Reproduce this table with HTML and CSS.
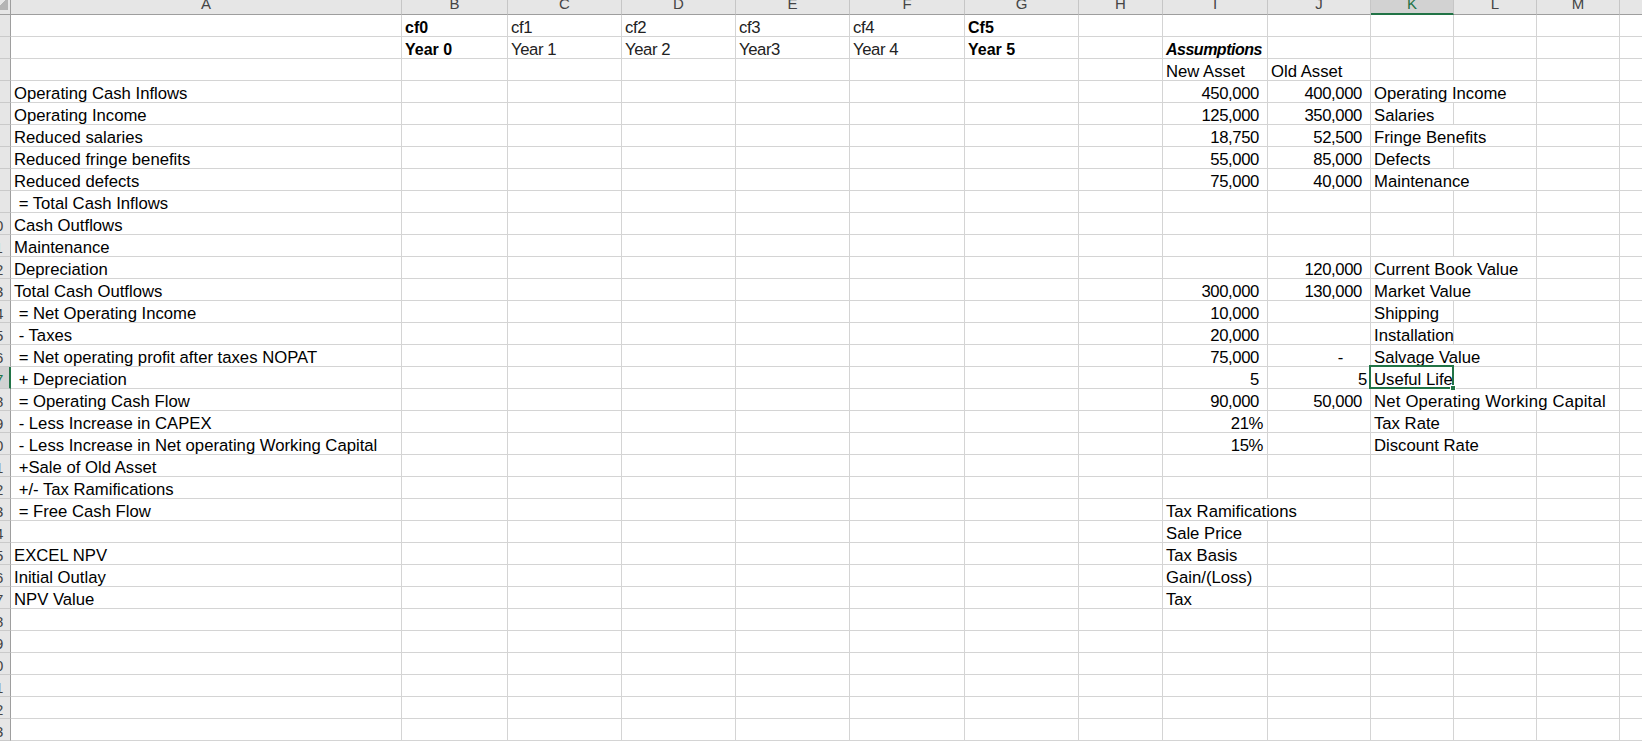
FILE: index.html
```html
<!DOCTYPE html>
<html lang="en">
<head>
    <meta charset="UTF-8">
    <meta name="viewport" content="width=device-width, initial-scale=1.0">
    <title>Capital Budgeting</title>
    <link rel="stylesheet" href="styles.css">
</head>
<body>
<div class="sheet">
    <div class="hdr">
        <div class="ch corner"></div>
        <div class="ch">A</div><div class="ch">B</div><div class="ch">C</div><div class="ch">D</div>
        <div class="ch">E</div><div class="ch">F</div><div class="ch">G</div><div class="ch">H</div>
        <div class="ch">I</div><div class="ch">J</div><div class="ch on">K</div><div class="ch">L</div>
        <div class="ch">M</div><div class="ch">N</div>
    </div>

    <div class="row"><div class="rh"><span>1</span></div>
        <div class="c"></div><div class="c b">cf0</div><div class="c thin">cf1</div><div class="c thin">cf2</div><div class="c thin">cf3</div><div class="c thin">cf4</div><div class="c b">Cf5</div>
        <div class="c"></div><div class="c"></div><div class="c"></div><div class="c"></div><div class="c"></div><div class="c"></div><div class="c"></div>
    </div>
    <div class="row"><div class="rh"><span>2</span></div>
        <div class="c"></div><div class="c b">Year 0</div><div class="c thin">Year 1</div><div class="c thin">Year 2</div><div class="c thin">Year3</div><div class="c thin">Year 4</div><div class="c b">Year 5</div>
        <div class="c"></div><div class="c bi">Assumptions</div><div class="c"></div><div class="c"></div><div class="c"></div><div class="c"></div><div class="c"></div>
    </div>
    <div class="row"><div class="rh"><span>3</span></div>
        <div class="c"></div><div class="c"></div><div class="c"></div><div class="c"></div><div class="c"></div><div class="c"></div><div class="c"></div><div class="c"></div>
        <div class="c">New Asset</div><div class="c">Old Asset</div><div class="c"></div><div class="c"></div><div class="c"></div><div class="c"></div>
    </div>
    <div class="row"><div class="rh"><span>4</span></div>
        <div class="c">Operating Cash Inflows</div><div class="c"></div><div class="c"></div><div class="c"></div><div class="c"></div><div class="c"></div><div class="c"></div><div class="c"></div>
        <div class="c num">450,000</div><div class="c num">400,000</div><div class="c s2">Operating Income</div><div class="c"></div><div class="c"></div>
    </div>
    <div class="row"><div class="rh"><span>5</span></div>
        <div class="c">Operating Income</div><div class="c"></div><div class="c"></div><div class="c"></div><div class="c"></div><div class="c"></div><div class="c"></div><div class="c"></div>
        <div class="c num">125,000</div><div class="c num">350,000</div><div class="c">Salaries</div><div class="c"></div><div class="c"></div><div class="c"></div>
    </div>
    <div class="row"><div class="rh"><span>6</span></div>
        <div class="c">Reduced salaries</div><div class="c"></div><div class="c"></div><div class="c"></div><div class="c"></div><div class="c"></div><div class="c"></div><div class="c"></div>
        <div class="c num">18,750</div><div class="c num">52,500</div><div class="c s2">Fringe Benefits</div><div class="c"></div><div class="c"></div>
    </div>
    <div class="row"><div class="rh"><span>7</span></div>
        <div class="c">Reduced fringe benefits</div><div class="c"></div><div class="c"></div><div class="c"></div><div class="c"></div><div class="c"></div><div class="c"></div><div class="c"></div>
        <div class="c num">55,000</div><div class="c num">85,000</div><div class="c">Defects</div><div class="c"></div><div class="c"></div><div class="c"></div>
    </div>
    <div class="row"><div class="rh"><span>8</span></div>
        <div class="c">Reduced defects</div><div class="c"></div><div class="c"></div><div class="c"></div><div class="c"></div><div class="c"></div><div class="c"></div><div class="c"></div>
        <div class="c num">75,000</div><div class="c num">40,000</div><div class="c s2">Maintenance</div><div class="c"></div><div class="c"></div>
    </div>
    <div class="row"><div class="rh"><span>9</span></div>
        <div class="c"> = Total Cash Inflows</div><div class="c"></div><div class="c"></div><div class="c"></div><div class="c"></div><div class="c"></div><div class="c"></div><div class="c"></div>
        <div class="c"></div><div class="c"></div><div class="c"></div><div class="c"></div><div class="c"></div><div class="c"></div>
    </div>
    <div class="row"><div class="rh"><span>10</span></div>
        <div class="c">Cash Outflows</div><div class="c"></div><div class="c"></div><div class="c"></div><div class="c"></div><div class="c"></div><div class="c"></div><div class="c"></div>
        <div class="c"></div><div class="c"></div><div class="c"></div><div class="c"></div><div class="c"></div><div class="c"></div>
    </div>
    <div class="row"><div class="rh"><span>11</span></div>
        <div class="c">Maintenance</div><div class="c"></div><div class="c"></div><div class="c"></div><div class="c"></div><div class="c"></div><div class="c"></div><div class="c"></div>
        <div class="c"></div><div class="c"></div><div class="c"></div><div class="c"></div><div class="c"></div><div class="c"></div>
    </div>
    <div class="row"><div class="rh"><span>12</span></div>
        <div class="c">Depreciation</div><div class="c"></div><div class="c"></div><div class="c"></div><div class="c"></div><div class="c"></div><div class="c"></div><div class="c"></div>
        <div class="c"></div><div class="c num">120,000</div><div class="c s2">Current Book Value</div><div class="c"></div><div class="c"></div>
    </div>
    <div class="row"><div class="rh"><span>13</span></div>
        <div class="c">Total Cash Outflows</div><div class="c"></div><div class="c"></div><div class="c"></div><div class="c"></div><div class="c"></div><div class="c"></div><div class="c"></div>
        <div class="c num">300,000</div><div class="c num">130,000</div><div class="c s2">Market Value</div><div class="c"></div><div class="c"></div>
    </div>
    <div class="row"><div class="rh"><span>14</span></div>
        <div class="c"> = Net Operating Income</div><div class="c"></div><div class="c"></div><div class="c"></div><div class="c"></div><div class="c"></div><div class="c"></div><div class="c"></div>
        <div class="c num">10,000</div><div class="c"></div><div class="c">Shipping</div><div class="c"></div><div class="c"></div><div class="c"></div>
    </div>
    <div class="row"><div class="rh"><span>15</span></div>
        <div class="c"> - Taxes</div><div class="c"></div><div class="c"></div><div class="c"></div><div class="c"></div><div class="c"></div><div class="c"></div><div class="c"></div>
        <div class="c num">20,000</div><div class="c"></div><div class="c">Installation</div><div class="c"></div><div class="c"></div><div class="c"></div>
    </div>
    <div class="row"><div class="rh"><span>16</span></div>
        <div class="c"> = Net operating profit after taxes NOPAT</div><div class="c"></div><div class="c"></div><div class="c"></div><div class="c"></div><div class="c"></div><div class="c"></div><div class="c"></div>
        <div class="c num">75,000</div><div class="c num dash">-</div><div class="c s2">Salvage Value</div><div class="c"></div><div class="c"></div>
    </div>
    <div class="row"><div class="rh on"><span>17</span></div>
        <div class="c"> + Depreciation</div><div class="c"></div><div class="c"></div><div class="c"></div><div class="c"></div><div class="c"></div><div class="c"></div><div class="c"></div>
        <div class="c num">5</div><div class="c num gen">5</div><div class="c sel">Useful Life</div><div class="c"></div><div class="c"></div><div class="c"></div>
    </div>
    <div class="row"><div class="rh"><span>18</span></div>
        <div class="c"> = Operating Cash Flow</div><div class="c"></div><div class="c"></div><div class="c"></div><div class="c"></div><div class="c"></div><div class="c"></div><div class="c"></div>
        <div class="c num">90,000</div><div class="c num">50,000</div><div class="c s3 wide">Net Operating Working Capital</div><div class="c"></div>
    </div>
    <div class="row"><div class="rh"><span>19</span></div>
        <div class="c"> - Less Increase in CAPEX</div><div class="c"></div><div class="c"></div><div class="c"></div><div class="c"></div><div class="c"></div><div class="c"></div><div class="c"></div>
        <div class="c num pct">21%</div><div class="c"></div><div class="c">Tax Rate</div><div class="c"></div><div class="c"></div><div class="c"></div>
    </div>
    <div class="row"><div class="rh"><span>20</span></div>
        <div class="c"> - Less Increase in Net operating Working Capital</div><div class="c"></div><div class="c"></div><div class="c"></div><div class="c"></div><div class="c"></div><div class="c"></div><div class="c"></div>
        <div class="c num pct">15%</div><div class="c"></div><div class="c s2">Discount Rate</div><div class="c"></div><div class="c"></div>
    </div>
    <div class="row"><div class="rh"><span>21</span></div>
        <div class="c"> +Sale of Old Asset</div><div class="c"></div><div class="c"></div><div class="c"></div><div class="c"></div><div class="c"></div><div class="c"></div><div class="c"></div>
        <div class="c"></div><div class="c"></div><div class="c"></div><div class="c"></div><div class="c"></div><div class="c"></div>
    </div>
    <div class="row"><div class="rh"><span>22</span></div>
        <div class="c"> +/- Tax Ramifications</div><div class="c"></div><div class="c"></div><div class="c"></div><div class="c"></div><div class="c"></div><div class="c"></div><div class="c"></div>
        <div class="c"></div><div class="c"></div><div class="c"></div><div class="c"></div><div class="c"></div><div class="c"></div>
    </div>
    <div class="row"><div class="rh"><span>23</span></div>
        <div class="c"> = Free Cash Flow</div><div class="c"></div><div class="c"></div><div class="c"></div><div class="c"></div><div class="c"></div><div class="c"></div><div class="c"></div>
        <div class="c s2">Tax Ramifications</div><div class="c"></div><div class="c"></div><div class="c"></div><div class="c"></div>
    </div>
    <div class="row"><div class="rh"><span>24</span></div>
        <div class="c"></div><div class="c"></div><div class="c"></div><div class="c"></div><div class="c"></div><div class="c"></div><div class="c"></div><div class="c"></div>
        <div class="c">Sale Price</div><div class="c"></div><div class="c"></div><div class="c"></div><div class="c"></div><div class="c"></div>
    </div>
    <div class="row"><div class="rh"><span>25</span></div>
        <div class="c">EXCEL NPV</div><div class="c"></div><div class="c"></div><div class="c"></div><div class="c"></div><div class="c"></div><div class="c"></div><div class="c"></div>
        <div class="c">Tax Basis</div><div class="c"></div><div class="c"></div><div class="c"></div><div class="c"></div><div class="c"></div>
    </div>
    <div class="row"><div class="rh"><span>26</span></div>
        <div class="c">Initial Outlay</div><div class="c"></div><div class="c"></div><div class="c"></div><div class="c"></div><div class="c"></div><div class="c"></div><div class="c"></div>
        <div class="c">Gain/(Loss)</div><div class="c"></div><div class="c"></div><div class="c"></div><div class="c"></div><div class="c"></div>
    </div>
    <div class="row"><div class="rh"><span>27</span></div>
        <div class="c">NPV Value</div><div class="c"></div><div class="c"></div><div class="c"></div><div class="c"></div><div class="c"></div><div class="c"></div><div class="c"></div>
        <div class="c">Tax</div><div class="c"></div><div class="c"></div><div class="c"></div><div class="c"></div><div class="c"></div>
    </div>
    <div class="row"><div class="rh"><span>28</span></div>
        <div class="c"></div><div class="c"></div><div class="c"></div><div class="c"></div><div class="c"></div><div class="c"></div><div class="c"></div>
        <div class="c"></div><div class="c"></div><div class="c"></div><div class="c"></div><div class="c"></div><div class="c"></div><div class="c"></div>
    </div>
    <div class="row"><div class="rh"><span>29</span></div>
        <div class="c"></div><div class="c"></div><div class="c"></div><div class="c"></div><div class="c"></div><div class="c"></div><div class="c"></div>
        <div class="c"></div><div class="c"></div><div class="c"></div><div class="c"></div><div class="c"></div><div class="c"></div><div class="c"></div>
    </div>
    <div class="row"><div class="rh"><span>30</span></div>
        <div class="c"></div><div class="c"></div><div class="c"></div><div class="c"></div><div class="c"></div><div class="c"></div><div class="c"></div>
        <div class="c"></div><div class="c"></div><div class="c"></div><div class="c"></div><div class="c"></div><div class="c"></div><div class="c"></div>
    </div>
    <div class="row"><div class="rh"><span>31</span></div>
        <div class="c"></div><div class="c"></div><div class="c"></div><div class="c"></div><div class="c"></div><div class="c"></div><div class="c"></div>
        <div class="c"></div><div class="c"></div><div class="c"></div><div class="c"></div><div class="c"></div><div class="c"></div><div class="c"></div>
    </div>
    <div class="row"><div class="rh"><span>32</span></div>
        <div class="c"></div><div class="c"></div><div class="c"></div><div class="c"></div><div class="c"></div><div class="c"></div><div class="c"></div>
        <div class="c"></div><div class="c"></div><div class="c"></div><div class="c"></div><div class="c"></div><div class="c"></div><div class="c"></div>
    </div>
    <div class="row"><div class="rh"><span>33</span></div>
        <div class="c"></div><div class="c"></div><div class="c"></div><div class="c"></div><div class="c"></div><div class="c"></div><div class="c"></div>
        <div class="c"></div><div class="c"></div><div class="c"></div><div class="c"></div><div class="c"></div><div class="c"></div><div class="c"></div>
    </div>
</div>
</body>
</html>
```

FILE: styles.css
```css
html, body {
    margin: 0;
    overflow: hidden;
    background: #fff;
}
body {
    font-family: "Liberation Sans", Arial, sans-serif;
    font-size: 16.7px;
    color: #000;
}
.sheet {
    width: 1703px;
}
.hdr, .row {
    display: grid;
    grid-template-columns: 11px 391px 106px 114px 114px 114px 115px 114px 84px 105px 103px 83px 83px 83px 83px;
}

/* column letters */
.ch {
    box-sizing: border-box;
    height: 15px;
    overflow: hidden;
    background: #e6e6e6;
    border-right: 1px solid #c6c6c6;
    border-bottom: 1px solid #9e9e9e;
    text-align: center;
    font-size: 15px;
    line-height: 8px;
    color: #444;
}
.ch.on {
    background: #d2d2d2;
    border-bottom: 2px solid #217346;
    color: #217346;
}
.corner {
    border-right-color: #9e9e9e;
    background-image: linear-gradient(135deg, transparent 50%, #b4b4b4 50%);
    background-size: 12px 12px;
    background-position: -4px -2px;
    background-repeat: no-repeat;
}

/* row numbers, only the tail of the header is in view */
.rh {
    box-sizing: border-box;
    height: 22px;
    overflow: hidden;
    background: #e6e6e6;
    border-right: 1px solid #9e9e9e;
    border-bottom: 1px solid #cacaca;
    font-size: 15px;
    color: #444;
    padding-top: 3px;
    line-height: 19px;
}
.rh span {
    display: block;
    width: 30px;
    margin-left: -20px;
    text-align: center;
}
.rh.on {
    background: #d2d2d2;
    border-right: 2px solid #217346;
    color: #217346;
}

/* cells */
.c {
    box-sizing: border-box;
    height: 22px;
    padding: 3px 3px 0;
    line-height: 19px;
    white-space: pre;
    border-right: 1px solid #d4d4d4;
    border-bottom: 1px solid #d4d4d4;
}
.s2 {
    grid-column: span 2;
}
.s3 {
    grid-column: span 3;
}
.wide {
    letter-spacing: 0.2px;
}
.b {
    font-weight: bold;
    font-size: 16px;
}
.bi {
    font-weight: bold;
    font-style: italic;
    font-size: 16px;
    letter-spacing: -0.5px;
}
.thin {
    color: #222;
    letter-spacing: -0.4px;
}
.num {
    text-align: right;
    padding-right: 8px;
    letter-spacing: -0.4px;
}
.num.gen {
    padding-right: 3px;
}
.num.pct {
    padding-right: 4px;
}
.num.dash {
    padding-right: 27px;
}

/* active cell */
.sel {
    position: relative;
}
.sel::after {
    content: "";
    position: absolute;
    left: -2px;
    top: -2px;
    right: -1px;
    bottom: -1px;
    border: 2px solid #217346;
}
.sel::before {
    content: "";
    position: absolute;
    right: -3px;
    bottom: -3px;
    width: 4px;
    height: 4px;
    background: #217346;
    border: 1px solid #fff;
    z-index: 1;
}
```
